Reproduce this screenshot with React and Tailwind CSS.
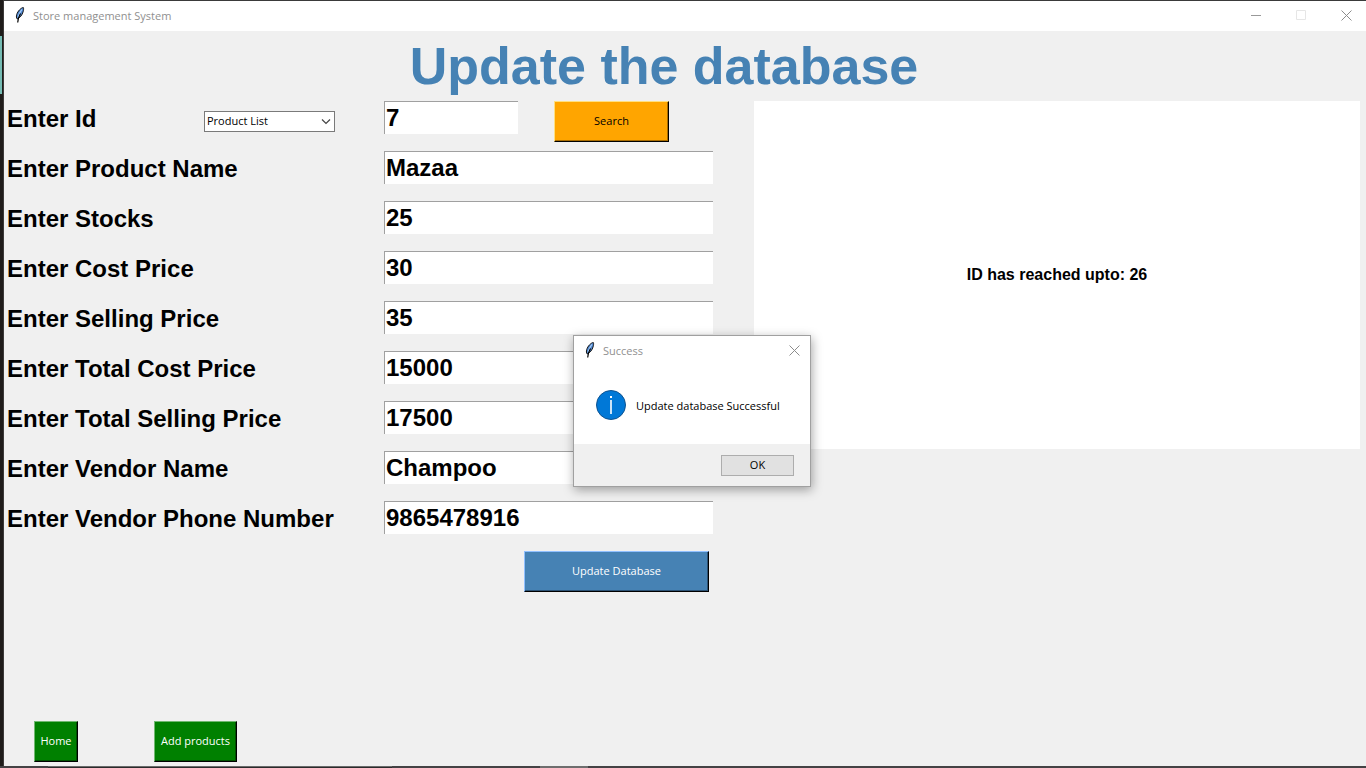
import { useState } from "react";

const fields = [
  { id: "name", label: "Enter Product Name", value: "Mazaa" },
  { id: "stocks", label: "Enter Stocks", value: "25" },
  { id: "cost", label: "Enter Cost Price", value: "30" },
  { id: "selling", label: "Enter Selling Price", value: "35" },
  { id: "totalCost", label: "Enter Total Cost Price", value: "15000" },
  { id: "totalSelling", label: "Enter Total Selling Price", value: "17500" },
  { id: "vendor", label: "Enter Vendor Name", value: "Champoo" },
  { id: "phone", label: "Enter Vendor Phone Number", value: "9865478916" },
];

function Feather() {
  return (
    <svg width="10" height="16" viewBox="0 0 10 16" aria-hidden="true">
      <path
        d="M8.300 .5C6 .8 2.800 4 1.700 7.600c-.5 1.800-.4 3.200.6 4.400C5 10.800 7.200 8 8.100 4.800 8.600 3.200 8.800 1.500 8.300.5Z"
        fill="#4f86cf"
        stroke="#111"
        strokeWidth="1"
      />
      <path d="M6.800 2.500C5 5 3.700 7.500 3 10.500" fill="none" stroke="#a9d0fb" strokeWidth="1.200" />
      <path d="M5.500 6.500C4 9 2.900 11.500 2.700 15.500" fill="none" stroke="#000" strokeWidth="1.200" />
    </svg>
  );
}

function Cross() {
  return (
    <svg width="11" height="11" viewBox="0 0 11 11" aria-hidden="true">
      <path d="M.5 .5l10 10M10.500 .5l-10 10" stroke="#8c8c8c" strokeWidth="1" fill="none" />
    </svg>
  );
}

function Label({ htmlFor, children }) {
  return (
    <label htmlFor={htmlFor} className="shrink-0 text-2xl leading-9 font-bold whitespace-nowrap">
      {children}
    </label>
  );
}

function Entry({ id, value, width }) {
  return (
    <input
      id={id}
      type="text"
      defaultValue={value}
      className={`${width} h-[33px] shrink-0 rounded-none border-t border-l border-[#a0a0a0] bg-white pl-px text-2xl font-bold outline-none`}
    />
  );
}

const raised =
  "h-[41px] shrink-0 border border-r-black border-b-black font-['Open_Sans',sans-serif] text-[11px] whitespace-nowrap";

export default function App() {
  const [open, setOpen] = useState(true);

  return (
    <div className="flex min-h-screen flex-col bg-[#f0f0f0] font-['Liberation_Sans',Arial,sans-serif] text-black">
      <div className="flex grow">
        <div className="w-1 shrink-0 border-r border-[#3c3a39] bg-[#1f1c1a] pt-9">
          <div className="h-[58px] w-0.5 bg-[#76bcb4]" />
        </div>

        <div className="flex min-w-0 grow flex-col border-t border-[#3a3a3a]">
          <header className="flex h-[30px] items-center bg-white pb-0.5 pl-[11px] font-['Open_Sans',sans-serif] text-[11px] text-[#909090]">
            <Feather />
            <span className="ml-2 grow pt-0.5">Store management System</span>
            <button type="button" aria-label="Minimize" className="flex w-[45px] justify-center">
              <svg width="10" height="10" viewBox="0 0 10 10" aria-hidden="true">
                <path d="M0 5.500h10" stroke="#999" />
              </svg>
            </button>
            <button type="button" aria-label="Maximize" className="flex w-[45px] justify-center">
              <svg width="10" height="10" viewBox="0 0 10 10" aria-hidden="true">
                <path d="M.5 .5h9v9h-9z" fill="none" stroke="#e6e6e6" />
              </svg>
            </button>
            <button type="button" aria-label="Close" className="mr-[-4px] flex w-[47px] justify-center">
              <Cross />
            </button>
          </header>

          <main className="flex grow flex-col">
            <h1 className="pr-[42px] text-center text-[52px] leading-[70px] font-bold text-[#4682b4]">
              Update the database
            </h1>

            <div className="flex items-start">
              <form className="w-[750px] shrink-0 pl-[3px]" onSubmit={(e) => e.preventDefault()}>
                <div className="flex h-[50px] items-start">
                  <div className="flex w-[377px] shrink-0">
                    <div className="w-[197px]">
                      <Label htmlFor="pid">Enter Id</Label>
                    </div>
                    <div className="relative mt-2.5 h-[21px] w-[131px] font-['Open_Sans',sans-serif] text-[11px]">
                      <select
                        aria-label="Product List"
                        className="h-full w-full appearance-none rounded-none border border-[#7a7a7a] bg-white pl-0.5 outline-none"
                      >
                        <option>Product List</option>
                      </select>
                      <svg
                        className="pointer-events-none absolute top-[7px] right-1"
                        width="10"
                        height="7"
                        viewBox="0 0 10 7"
                        aria-hidden="true"
                      >
                        <path d="M1 1.500l4 4 4-4" fill="none" stroke="#444" strokeWidth="1.200" />
                      </svg>
                    </div>
                  </div>
                  <Entry id="pid" value="7" width="w-[134px]" />
                  <button
                    type="button"
                    className={`${raised} ml-9 w-[115px] border-t-[#ffe080] border-l-[#ffe080] bg-[#ffa500] shadow-[inset_-1px_-1px_#a86c00]`}
                  >
                    Search
                  </button>
                </div>

                {fields.map((f) => (
                  <div key={f.id} className="flex h-[50px] items-start">
                    <div className="w-[377px] shrink-0">
                      <Label htmlFor={f.id}>{f.label}</Label>
                    </div>
                    <Entry id={f.id} value={f.value} width="w-[329px]" />
                  </div>
                ))}

                <div className="flex pl-[517px]">
                  <button
                    type="submit"
                    className={`${raised} w-[185px] border-t-[#90c0ff] border-l-[#90c0ff] bg-[#4682b4] text-white shadow-[inset_-1px_-1px_#2c5274]`}
                  >
                    Update Database
                  </button>
                </div>
              </form>

              <section className="mr-1.5 flex h-[348px] grow items-center justify-center bg-white">
                <p className="text-base font-bold">ID has reached upto: 26</p>
              </section>
            </div>

            <nav className="mt-auto flex gap-[76px] pb-1 pl-[30px]">
              <button
                type="button"
                className={`${raised} w-11 border-t-[#70b870] border-l-[#70b870] bg-[#008000] text-white shadow-[inset_-1px_-1px_#005000]`}
              >
                Home
              </button>
              <button
                type="button"
                className={`${raised} w-[83px] border-t-[#70b870] border-l-[#70b870] bg-[#008000] text-white shadow-[inset_-1px_-1px_#005000]`}
              >
                Add products
              </button>
            </nav>
          </main>
        </div>
      </div>

      <footer className="flex h-0.5 bg-[#444244]">
        <div className="ml-12 w-[344px] border-t border-[#6a6a6a] bg-[#2b2b2b]" />
        <div className="ml-[148px] w-12 bg-[#6e6e6e]" />
      </footer>

      {open && (
        <div
          role="dialog"
          aria-labelledby="dialog-title"
          className="absolute top-[335px] left-[573px] flex w-[238px] flex-col border border-[#a0a0a0] bg-white font-['Open_Sans',sans-serif] text-[11px] shadow-[1px_3px_10px_rgba(0,0,0,0.35)]"
        >
          <div className="flex h-[30px] items-center pr-2.5 pb-0.5 pl-[11px] text-[#909090]">
            <Feather />
            <span id="dialog-title" className="ml-2 grow pt-0.5">
              Success
            </span>
            <button type="button" aria-label="Close dialog" className="flex" onClick={() => setOpen(false)}>
              <Cross />
            </button>
          </div>
          <div className="flex h-[78px] items-center gap-2.5 pl-[22px]">
            <svg width="30" height="30" viewBox="0 0 30 30" aria-hidden="true">
              <circle cx="15" cy="15" r="14.500" fill="#0078d7" stroke="#0f5390" />
              <path d="M15 10v14" stroke="#fff" strokeWidth="1.600" />
              <path d="M15 6v2" stroke="#fff" strokeWidth="2" />
            </svg>
            <p className="pt-0.5 whitespace-nowrap">Update database Successful</p>
          </div>
          <div className="flex h-[42px] items-center justify-end bg-[#f0f0f0] pr-4">
            <button
              type="button"
              onClick={() => setOpen(false)}
              className="h-[21px] w-[73px] border border-[#adadad] bg-[#e1e1e1]"
            >
              OK
            </button>
          </div>
        </div>
      )}
    </div>
  );
}
